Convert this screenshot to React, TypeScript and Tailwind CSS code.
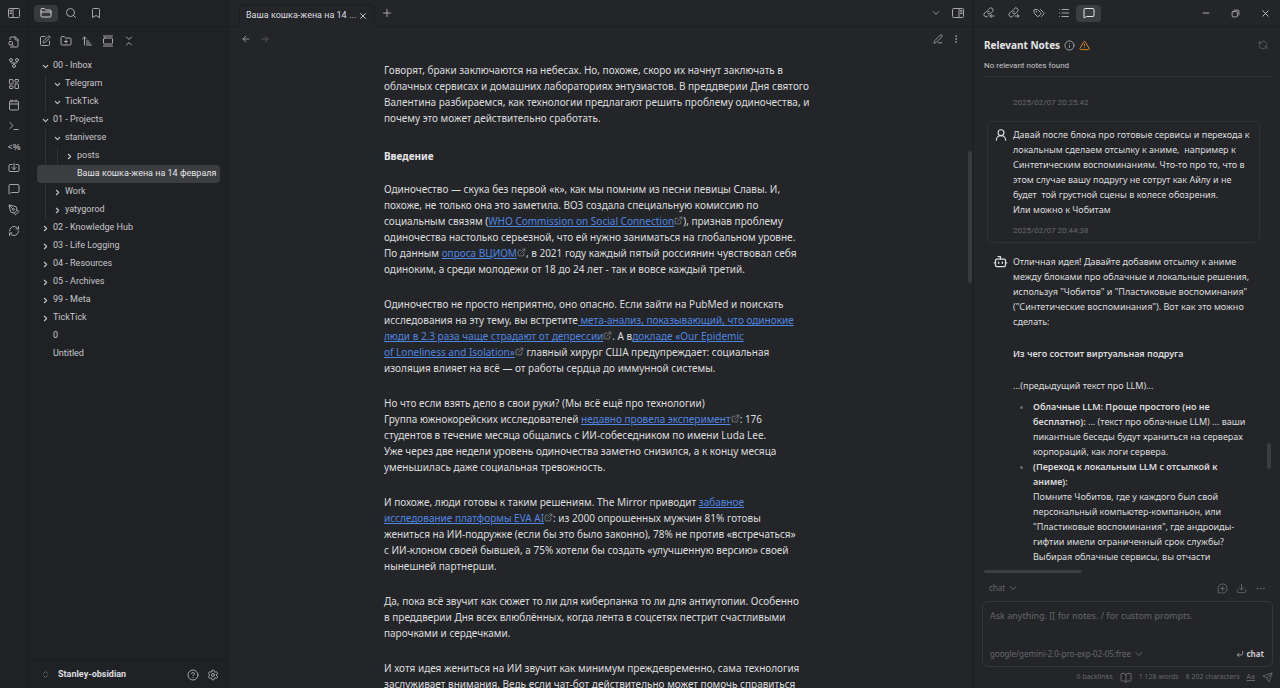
import React from 'react';
import {
    ArrowLeft,
    ArrowRight,
    ArrowUpNarrowWide,
    BookOpen,
    Bookmark,
    Bot,
    Calendar,
    ChevronDown,
    ChevronRight,
    ChevronsDownUp,
    ChevronsUpDown,
    CircleHelp,
    CornerDownLeft,
    Download,
    Ellipsis,
    EllipsisVertical,
    ExternalLink,
    FolderClosed,
    FolderPlus,
    GalleryVertical,
    GitFork,
    Import,
    Info,
    LayoutDashboard,
    List,
    MessageCirclePlus,
    MessageSquare,
    Minus,
    PenLine,
    PenTool,
    Plus,
    RefreshCcw,
    RefreshCw,
    Search,
    Send,
    Settings,
    SquarePen,
    Terminal,
    TriangleAlert,
    UserRound,
    X
} from 'lucide-react';

interface TreeItem {
    name: string;
    depth: number;
    state: 'open' | 'closed' | 'file';
    active?: boolean;
}

const tree: TreeItem[] = [
    { name: '00 - Inbox', depth: 0, state: 'open' },
    { name: 'Telegram', depth: 1, state: 'open' },
    { name: 'TickTick', depth: 1, state: 'open' },
    { name: '01 - Projects', depth: 0, state: 'open' },
    { name: 'staniverse', depth: 1, state: 'open' },
    { name: 'posts', depth: 2, state: 'closed' },
    { name: 'Ваша кошка-жена на 14 февраля', depth: 2, state: 'file', active: true },
    { name: 'Work', depth: 1, state: 'closed' },
    { name: 'yatygorod', depth: 1, state: 'closed' },
    { name: '02 - Knowledge Hub', depth: 0, state: 'closed' },
    { name: '03 - Life Logging', depth: 0, state: 'closed' },
    { name: '04 - Resources', depth: 0, state: 'closed' },
    { name: '05 - Archives', depth: 0, state: 'closed' },
    { name: '99 - Meta', depth: 0, state: 'closed' },
    { name: 'TickTick', depth: 0, state: 'closed' },
    { name: '0', depth: 0, state: 'file' },
    { name: 'Untitled', depth: 0, state: 'file' },
];

interface IconProps {
    className?: string;
}

const Svg: React.FC<IconProps & { children: React.ReactNode }> = ({ className, children }) => (
    <svg viewBox="0 0 24 24" fill="none" stroke="currentColor" strokeWidth="2" strokeLinecap="round" strokeLinejoin="round" className={className}>
        {children}
    </svg>
);

const SidebarLeft: React.FC<IconProps> = ({ className }) => (
    <Svg className={className}>
        <rect x="1" y="3" width="22" height="18" rx="2" />
        <path d="M10 3v18M4 7h3M4 10h3M4 13h3" />
    </Svg>
);

const SidebarRight: React.FC<IconProps> = ({ className }) => (
    <Svg className={className}>
        <rect x="1" y="3" width="22" height="18" rx="2" />
        <path d="M14 3v18M17 7h3M17 10h3M17 13h3" />
    </Svg>
);

const LinkIn: React.FC<IconProps> = ({ className }) => (
    <Svg className={className}>
        <path d="M9 12a4.5 4.5 0 0 0 6.8.5l3-3a4.5 4.5 0 0 0-6.4-6.4l-1.6 1.6" />
        <path d="M13 9.500a4.500 4.500 0 0 0-6.800-.5l-3 3a4.500 4.500 0 0 0 6.400 6.400l.9-.9" />
        <path d="M22 18h-8M17 15l-3 3 3 3" />
    </Svg>
);

const LinkOut: React.FC<IconProps> = ({ className }) => (
    <Svg className={className}>
        <path d="M9 12a4.5 4.5 0 0 0 6.8.5l3-3a4.5 4.5 0 0 0-6.4-6.4l-1.6 1.6" />
        <path d="M13 9.500a4.500 4.500 0 0 0-6.800-.5l-3 3a4.500 4.500 0 0 0 6.400 6.400l.9-.9" />
        <path d="M14 18h8M19 15l3 3-3 3" />
    </Svg>
);

const TagPair: React.FC<IconProps> = ({ className }) => (
    <Svg className={className}>
        <path d="m15 5 6.300 6.300a2.400 2.400 0 0 1 0 3.400L17 19" />
        <path d="M9.586 5.586A2 2 0 0 0 8.172 5H3a1 1 0 0 0-1 1v5.172a2 2 0 0 0 .586 1.414L8.290 18.290a2.426 2.426 0 0 0 3.420 0l3.580-3.580a2.426 2.426 0 0 0 0-3.420z" />
        <circle cx="6.5" cy="9.5" r=".5" fill="currentColor" />
    </Svg>
);

const QuickSwitch: React.FC<IconProps> = ({ className }) => (
    <Svg className={className}>
        <path d="M14 2v4a2 2 0 0 0 2 2h4" />
        <path d="M5 22h13a2 2 0 0 0 2-2V7l-5-5H6a2 2 0 0 0-2 2v3" />
        <rect x="2" y="11" width="7" height="7" rx="2" />
        <path d="m8 17 3 3" />
    </Svg>
);

const Restore: React.FC<IconProps> = ({ className }) => (
    <Svg className={className}>
        <rect x="3" y="7" width="14" height="14" rx="2" />
        <path d="M8 3h11a2 2 0 0 1 2 2v11" />
    </Svg>
);

const ribbon = [
    { label: 'Quick switcher', icon: QuickSwitch },
    { label: 'Graph view', icon: GitFork },
    { label: 'Canvas', icon: LayoutDashboard },
    { label: 'Daily note', icon: Calendar },
    { label: 'Command palette', icon: Terminal },
    { label: 'Templater', icon: null },
    { label: 'Import', icon: Import },
    { label: 'Chat', icon: MessageSquare },
    { label: 'Drawing', icon: PenTool },
    { label: 'Sync', icon: RefreshCw },
];

const treeTools = [
    { label: 'New note', icon: SquarePen },
    { label: 'New folder', icon: FolderPlus },
    { label: 'Sort order', icon: ArrowUpNarrowWide },
    { label: 'Auto-reveal', icon: GalleryVertical },
    { label: 'Collapse all', icon: ChevronsDownUp },
];

const rightTabs = [
    { label: 'Backlinks', icon: LinkIn },
    { label: 'Outgoing links', icon: LinkOut },
    { label: 'Tags', icon: TagPair },
    { label: 'Outline', icon: List },
    { label: 'Copilot', icon: MessageSquare },
];

const Ext: React.FC<{ children: React.ReactNode }> = ({ children }) => (
    <>
        <a href="#" className="text-[#4f86e0] underline">{children}</a>
        <ExternalLink className="inline w-[9px] h-[9px] -mt-1 text-[#8a8b8e]" />
    </>
);

const Ribbon: React.FC = () => (
    <nav className="w-[29px] shrink-0 bg-[#202125] border-r border-[#1b1c1f] flex flex-col items-center">
        <div className="h-[27px] w-full flex items-center justify-center border-b border-[#1b1c1f]">
            <button aria-label="Toggle left sidebar"><SidebarLeft className="w-3 h-3" /></button>
        </div>
        <div className="flex flex-col items-center pt-1">
            {ribbon.map((item) => (
                <button key={item.label} aria-label={item.label} className="h-[21px] flex items-center justify-center">
                    {item.icon ? <item.icon className="w-3 h-3" /> : <span className="text-[9px] font-semibold">&lt;%</span>}
                </button>
            ))}
        </div>
    </nav>
);

const FileTree: React.FC = () => (
    <ul className="px-2 pt-[3px] flex-1 min-h-0 overflow-hidden">
        {tree.map((item, i) => (
            <li key={i}>
                <button className={`w-full h-[18px] pl-1 flex items-center text-left text-[9px] font-['Roboto','Noto_Sans',sans-serif] whitespace-nowrap rounded-sm ${item.active ? 'bg-[#3c3d40] text-[#e4e5e7]' : 'text-[#c6c7ca]'}`}>
                    {Array.from({ length: item.depth }).map((_, d) => (
                        <span key={d} className="w-3 h-[18px] pl-1 shrink-0">
                            {!item.active && <span className="block w-px h-full bg-[#303135]" />}
                        </span>
                    ))}
                    <span className="w-3 h-[18px] shrink-0 flex items-center">
                        {item.state === 'open' && <ChevronDown className="w-[9px] h-[9px]" strokeWidth={3} />}
                        {item.state === 'closed' && <ChevronRight className="w-[9px] h-[9px]" strokeWidth={3} />}
                    </span>
                    {item.name}
                </button>
            </li>
        ))}
    </ul>
);

const Sidebar: React.FC = () => (
    <aside className="w-[200px] shrink-0 bg-[#202125] border-r border-[#1b1c1f] flex flex-col">
        <div className="h-[27px] shrink-0 px-[5px] flex items-center border-b border-[#1b1c1f]">
            <button aria-label="Files" className="w-[24px] h-[17px] rounded-sm bg-[#38393d] text-[#d0d1d4] flex items-center justify-center"><FolderClosed className="w-3 h-3" /></button>
            <button aria-label="Search" className="w-[25px] flex justify-center"><Search className="w-3 h-3" /></button>
            <button aria-label="Bookmarks" className="w-[25px] flex justify-center"><Bookmark className="w-3 h-3" /></button>
        </div>
        <div className="h-[27px] shrink-0 px-[5px] flex items-center">
            {treeTools.map((tool) => (
                <button key={tool.label} aria-label={tool.label} className="w-[21px] flex justify-center"><tool.icon className="w-3 h-3" /></button>
            ))}
        </div>
        <FileTree />
        <div className="h-[28px] shrink-0 pl-3 pr-[9px] flex items-center gap-2 border-t border-[#1b1c1f]">
            <ChevronsUpDown className="w-[9px] h-[9px] text-[#77787b]" />
            <span className="flex-1 text-[9px] font-bold font-['Roboto','Noto_Sans',sans-serif] text-[#dcdde0]">Stanley-obsidian</span>
            <button aria-label="Help"><CircleHelp className="w-3 h-3" /></button>
            <button aria-label="Settings"><Settings className="w-3 h-3" /></button>
        </div>
    </aside>
);

const Article: React.FC = () => (
    <article className="w-[434px] mx-auto pt-[11px] text-[10px] leading-4 text-[#dcddde] whitespace-nowrap">
        <p>
            Говорят, браки заключаются на небесах. Но, похоже, скоро их начнут заключать в<br />
            облачных сервисах и домашних лабораториях энтузиастов. В преддверии Дня святого<br />
            Валентина разбираемся, как технологии предлагают решить проблему одиночества, и<br />
            почему это может действительно сработать.
        </p>
        <h2 className="mt-[22px] mb-[17px] font-bold text-[#e4e5e7]">Введение</h2>
        <div className="space-y-[19px]">
            <p>
                Одиночество — скука без первой «к», как мы помним из песни певицы Славы. И,<br />
                похоже, не только она это заметила. ВОЗ создала специальную комиссию по<br />
                социальным связям (<Ext>WHO Commission on Social Connection</Ext>), признав проблему<br />
                одиночества настолько серьезной, что ей нужно заниматься на глобальном уровне.<br />
                По данным <Ext>опроса ВЦИОМ</Ext>, в 2021 году каждый пятый россиянин чувствовал себя<br />
                одиноким, а среди молодежи от 18 до 24 лет - так и вовсе каждый третий.
            </p>
            <p>
                Одиночество не просто неприятно, оно опасно. Если зайти на PubMed и поискать<br />
                исследования на эту тему, вы встретите<Ext> мета-анализ, показывающий, что одинокие<br />
                люди в 2.3 раза чаще страдают от депрессии</Ext>. А в<Ext>докладе «Our Epidemic<br />
                of Loneliness and Isolation»</Ext> главный хирург США предупреждает: социальная<br />
                изоляция влияет на всё — от работы сердца до иммунной системы.
            </p>
            <p>
                Но что если взять дело в свои руки? (Мы всё ещё про технологии)<br />
                Группа южнокорейских исследователей <Ext>недавно провела эксперимент</Ext>: 176<br />
                студентов в течение месяца общались с ИИ-собеседником по имени Luda Lee.<br />
                Уже через две недели уровень одиночества заметно снизился, а к концу месяца<br />
                уменьшилась даже социальная тревожность.
            </p>
            <p>
                И похоже, люди готовы к таким решениям. The Mirror приводит <Ext>забавное<br />
                исследование платформы EVA AI</Ext>: из 2000 опрошенных мужчин 81% готовы<br />
                жениться на ИИ-подружке (если бы это было законно), 78% не против «встречаться»<br />
                с ИИ-клоном своей бывшей, а 75% хотели бы создать «улучшенную версию» своей<br />
                нынешней партнерши.
            </p>
            <p>
                Да, пока всё звучит как сюжет то ли для киберпанка то ли для антиутопии. Особенно<br />
                в преддверии Дня всех влюблённых, когда лента в соцсетях пестрит счастливыми<br />
                парочками и сердечками.
            </p>
            <p>
                И хотя идея жениться на ИИ звучит как минимум преждевременно, сама технология<br />
                заслуживает внимания. Ведь если чат-бот действительно может помочь справиться
            </p>
        </div>
    </article>
);

const Editor: React.FC = () => (
    <main className="relative flex-1 min-w-0 bg-[#242529] flex flex-col">
        <div className="h-[27px] shrink-0 pl-[10px] pr-[9px] flex items-center border-b border-[#1d1e21]">
            <div className="w-[136px] h-[23px] mt-1 -mb-px px-[6px] flex items-center justify-between rounded-t-md border border-b-0 border-[#1d1e21] bg-[#242529] text-[9px] font-['Roboto','Noto_Sans',sans-serif] text-[#dcdde0]">
                <span className="truncate">Ваша кошка-жена на 14 ...</span>
                <button aria-label="Close tab" className="flex text-[#dcdde0]"><X className="w-[10px] h-[10px]" /></button>
            </div>
            <button aria-label="New tab" className="ml-[6px]"><Plus className="w-3 h-3" /></button>
            <div className="ml-auto flex items-center gap-[11px]">
                <button aria-label="Tab list"><ChevronDown className="w-[10px] h-[10px]" /></button>
                <button aria-label="Toggle right sidebar"><SidebarRight className="w-3 h-3" /></button>
            </div>
        </div>
        <div className="h-[24px] shrink-0 px-3 flex items-center gap-2">
            <button aria-label="Back"><ArrowLeft className="w-[10px] h-[10px]" /></button>
            <button aria-label="Forward" className="ml-px text-[#5b5c60]"><ArrowRight className="w-[10px] h-[10px]" /></button>
            <button aria-label="Edit" className="ml-auto"><PenLine className="w-[10px] h-[10px]" /></button>
            <button aria-label="More options"><EllipsisVertical className="w-[10px] h-[10px]" /></button>
        </div>
        <div className="flex-1 min-h-0 overflow-hidden">
            <Article />
        </div>
        <div className="absolute right-px top-[151px] w-1 h-[132px] rounded-full bg-[#393a3e]" />
    </main>
);

const Chat: React.FC = () => (
    <div className="relative flex-1 min-h-0 overflow-hidden">
        <div className="pl-[5px] pr-3 text-[9px] leading-[15px] text-[#dcddde] whitespace-pre">
            <p className="pt-[18px] pl-[26px] text-[8px] font-['Roboto','Noto_Sans',sans-serif] text-[#66676b]">2025/02/07 20:25:42</p>
            <div className="mt-[11px] pl-[6px] pt-[5px] pb-1 flex gap-[5px] rounded-md border border-[#303135]">
                <UserRound className="w-[14px] h-[14px] shrink-0 mt-px" />
                <div>
                    <p>{'Давай после блока про готовые сервисы и перехода к\nлокальным сделаем отсылку к аниме,  например к\nСинтетическим воспоминаниям. Что-то про то, что в\nэтом случае вашу подругу не сотрут как Айлу и не\nбудет  той грустной сцены в колесе обозрения.\nИли можно к Чобитам'}</p>
                    <p className="mt-[6px] text-[8px] font-['Roboto','Noto_Sans',sans-serif] text-[#66676b]">2025/02/07 20:44:38</p>
                </div>
            </div>
            <div className="mt-[11px] pl-[6px] flex gap-[5px]">
                <Bot className="w-[15px] h-[15px] shrink-0" />
                <div>
                    <p>{'Отличная идея! Давайте добавим отсылку к аниме\nмежду блоками про облачные и локальные решения,\nиспользуя "Чобитов" и "Пластиковые воспоминания"\n("Синтетические воспоминания"). Вот как это можно\nсделать:'}</p>
                    <h3 className="my-[17px] font-semibold">Из чего состоит виртуальная подруга</h3>
                    <p>...(предыдущий текст про LLM)...</p>
                    <ul className="mt-[6px] pl-5 list-disc marker:text-[#66676b]">
                        <li>
                            <strong className="font-semibold">{'Облачные LLM: Проще простого (но не\nбесплатно):'}</strong>
                            {' ... (текст про облачные LLM) ... ваши\nпикантные беседы будут храниться на серверах\nкорпораций, как логи сервера.'}
                        </li>
                        <li>
                            <strong className="font-semibold">{'(Переход к локальным LLM с отсылкой к\nаниме):'}</strong>
                            {'\nПомните Чобитов, где у каждого был свой\nперсональный компьютер-компаньон, или\n"Пластиковые воспоминания", где андроиды-\nгифтии имели ограниченный срок службы?\nВыбирая облачные сервисы, вы отчасти'}
                        </li>
                    </ul>
                </div>
            </div>
        </div>
        <div className="absolute right-px bottom-[104px] w-1 h-[26px] rounded-full bg-[#3c3d41]" />
        <div className="absolute left-[2px] bottom-0 w-[98px] h-[3px] rounded-full bg-[#3c3d41]" />
    </div>
);

const CopilotPane: React.FC = () => (
    <aside className="w-[307px] shrink-0 bg-[#242529] border-l border-[#1b1c1f] flex flex-col">
        <div className="h-[27px] shrink-0 pl-[2px] pr-[9px] flex items-center border-b border-[#1d1e21]">
            {rightTabs.map((tab) => (
                <button
                    key={tab.label}
                    aria-label={tab.label}
                    className={`w-[25px] h-[17px] rounded-sm flex items-center justify-center ${tab.label === 'Copilot' ? 'bg-[#3c3d40] text-[#e4e5e7]' : ''}`}
                >
                    <tab.icon className="w-3 h-3" />
                </button>
            ))}
            <div className="ml-auto flex items-center gap-5 text-[#c6c7ca]">
                <button aria-label="Minimize"><Minus className="w-[10px] h-[10px]" /></button>
                <button aria-label="Restore"><Restore className="w-[9px] h-[9px]" /></button>
                <button aria-label="Close"><X className="w-[11px] h-[11px]" /></button>
            </div>
        </div>
        <div className="flex-1 min-h-0 px-2 flex flex-col">
            <div className="px-[2px] pt-[10px] flex items-center gap-1">
                <h2 className="text-[10px] leading-4 font-bold text-[#e4e5e7]">Relevant Notes</h2>
                <Info className="w-[11px] h-[11px]" />
                <TriangleAlert className="w-[11px] h-[11px] text-[#e08a1e]" />
                <button aria-label="Refresh" className="ml-auto mr-[2px] text-[#5f6064]"><RefreshCcw className="w-[10px] h-[10px]" /></button>
            </div>
            <p className="px-[2px] pt-[6px] pb-[3px] text-[8px] leading-[14px] font-['Roboto','Noto_Sans',sans-serif] text-[#c6c7ca] border-b border-[#303135]">No relevant notes found</p>
            <Chat />
            <div className="h-[28px] pt-[2px] pl-[7px] pr-[6px] shrink-0 flex items-center gap-2 text-[#66676b]">
                <label className="flex items-center gap-[2px] text-[8px]">
                    <select aria-label="Mode" className="appearance-none field-sizing-content bg-transparent">
                        <option>chat</option>
                    </select>
                    <ChevronDown className="w-3 h-3" />
                </label>
                <button aria-label="New chat" className="ml-auto"><MessageCirclePlus className="w-[11px] h-[11px]" /></button>
                <button aria-label="Save chat"><Download className="w-[11px] h-[11px]" /></button>
                <button aria-label="More"><Ellipsis className="w-[11px] h-[11px]" /></button>
            </div>
            <div className="h-[66px] shrink-0 -mr-px pl-[7px] pr-2 pt-[6px] pb-[6px] flex flex-col rounded-md border border-[#36373b] text-[#66676b]">
                <textarea aria-label="Message" placeholder="Ask anything. [[ for notes. / for custom prompts." className="flex-1 min-h-0 resize-none bg-transparent text-[9px] leading-4 placeholder:text-[#66676b] outline-none" />
                <div className="flex items-center justify-between">
                    <label className="flex items-center gap-[2px] text-[8px]">
                        <select aria-label="Model" className="appearance-none field-sizing-content bg-transparent">
                            <option>google/gemini-2.0-pro-exp-02-05:free</option>
                        </select>
                        <ChevronDown className="w-3 h-3" />
                    </label>
                    <button className="flex items-center gap-[2px] text-[8px] font-bold text-[#c6c7ca]">
                        <CornerDownLeft className="w-[8px] h-[8px]" />
                        chat
                    </button>
                </div>
            </div>
        </div>
        <footer className="h-[21px] shrink-0 pl-2 pr-[7px] flex items-center justify-end gap-[7px] text-[7px] text-[#66676b] whitespace-nowrap">
            <span>0 backlinks</span>
            <BookOpen className="w-3 h-3" />
            <span>1 128 words</span>
            <span>8 202 characters</span>
            <span className="underline">Aa</span>
            <Send className="w-[11px] h-[11px]" />
        </footer>
    </aside>
);

const App: React.FC = () => {
    return (
        <div className="h-screen flex overflow-hidden bg-[#242529] text-[#a6a7aa] font-['Noto_Sans','Open_Sans',sans-serif]">
            <Ribbon />
            <Sidebar />
            <Editor />
            <CopilotPane />
        </div>
    );
};

export default App;
